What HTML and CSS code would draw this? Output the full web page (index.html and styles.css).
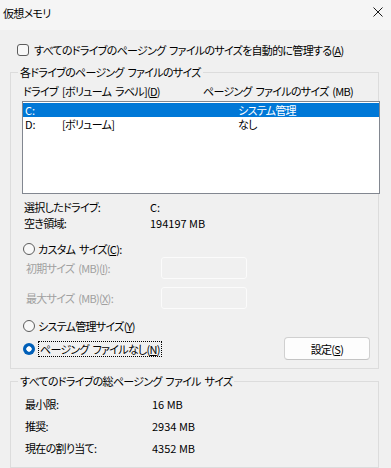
FILE: index.html
```html
<!DOCTYPE html>
<html lang="ja">
<head>
  <meta charset="UTF-8" />
  <meta name="viewport" content="width=device-width, initial-scale=1.0" />
  <title>仮想メモリ</title>
  <link rel="stylesheet" href="styles.css">
</head>
<body>

  <div class="window">
    <div class="titlebar">
      <span class="title">仮想メモリ</span>
      <svg class="close" width="10" height="10" viewBox="0 0 10 10">
        <path d="M0.5 0.5 L9.5 9.5 M9.5 0.5 L0.5 9.5" stroke="#1a1a1a" stroke-width="1" fill="none" />
      </svg>
    </div>

    <div class="content">
      <div class="check-row">
        <span class="checkbox"></span>
        <span>すべてのドライブのページング ファイルのサイズを自動的に管理する(<u>A</u>)</span>
      </div>

      <fieldset class="group">
        <legend>各ドライブのページング ファイルのサイズ</legend>

        <div class="list-header">
          <span>ドライブ</span>
          <span>[ボリューム ラベル](<u>D</u>)</span>
          <span>ページング ファイルのサイズ (MB)</span>
        </div>

        <div class="listbox">
          <div class="list-row selected">
            <span class="num">C:</span>
            <span></span>
            <span>システム管理</span>
          </div>
          <div class="list-row">
            <span class="num">D:</span>
            <span>[ボリューム]</span>
            <span>なし</span>
          </div>
        </div>

        <div class="info">
          <div class="info-row"><span>選択したドライブ:</span><span class="num">C:</span></div>
          <div class="info-row"><span>空き領域:</span><span class="num">194197 MB</span></div>
        </div>

        <div class="radio-row custom">
          <span class="radio"></span>
          <span>カスタム サイズ(<u>C</u>):</span>
        </div>
        <div class="size-row">
          <span>初期サイズ (MB)(<u>I</u>):</span>
          <span class="size-input"></span>
        </div>
        <div class="size-row second">
          <span>最大サイズ (MB)(<u>X</u>):</span>
          <span class="size-input"></span>
        </div>

        <div class="radio-row system">
          <span class="radio"></span>
          <span>システム管理サイズ(<u>Y</u>)</span>
        </div>
        <div class="none-row">
          <div class="radio-row">
            <span class="radio checked"></span>
            <span class="focus">ページング ファイルなし(<u>N</u>)</span>
          </div>
          <button class="set-button">設定(<u>S</u>)</button>
        </div>
      </fieldset>

      <fieldset class="group totals">
        <legend>すべてのドライブの総ページング ファイル サイズ</legend>
        <div class="total-row"><span>最小限:</span><span class="num">16 MB</span></div>
        <div class="total-row"><span>推奨:</span><span class="num">2934 MB</span></div>
        <div class="total-row"><span>現在の割り当て:</span><span class="num">4352 MB</span></div>
      </fieldset>
    </div>
  </div>

</body>
</html>
```

FILE: styles.css
```css
* {
  box-sizing: border-box;
}
body {
  margin: 0;
  font-family: "Noto Sans CJK JP", "Noto Sans", sans-serif;
  font-size: 11px;
  letter-spacing: -0.7px;
  word-spacing: 2px;
  font-feature-settings: "palt";
  color: #000;
}
u {
  text-underline-offset: 1px;
}
.num {
  letter-spacing: 0;
  word-spacing: 0;
}
.window {
  width: 391px;
  height: 468px;
  background-color: #f0f0f0;
  overflow: hidden;
}
.titlebar {
  height: 30px;
  background-color: #f5f5f5;
  display: flex;
  justify-content: space-between;
  align-items: flex-start;
  padding: 5px 8px 0 3px;
  line-height: 16px;
}
.close {
  margin-top: 2px;
}
.content {
  padding: 0 12px 0 10px;
}
.check-row {
  margin-top: 12px;
  height: 16px;
  display: flex;
  align-items: center;
  padding-left: 7px;
  white-space: nowrap;
}
.checkbox {
  width: 12px;
  height: 12px;
  border: 1px solid #5c5c5c;
  border-radius: 3px;
  background-color: #f8f8f8;
  margin-right: 5px;
}
.group {
  margin: 7px 0 0 0;
  padding: 0 0 8px 0;
  width: 369px;
  min-width: 0;
  border: 1px solid #dcdcdc;
}
.group legend {
  margin-left: 7px;
  padding: 0 2px;
  line-height: 14px;
}
.list-header {
  margin-top: 5px;
  line-height: 14px;
  display: grid;
  grid-template-columns: 39px 141px auto;
  padding-left: 12px;
  white-space: nowrap;
}
.listbox {
  margin: 3px 0 0 11px;
  width: 358px;
  height: 93px;
  border: 1px solid #828790;
  background-color: #fff;
  padding-top: 1px;
}
.list-row {
  height: 14px;
  line-height: 14px;
  display: grid;
  grid-template-columns: 37px 176px auto;
  padding-left: 2px;
}
.list-row.selected {
  background-color: #0078d7;
  color: #fff;
}
.info {
  margin-top: 5px;
}
.info-row {
  line-height: 16px;
  display: grid;
  grid-template-columns: 126px auto;
  padding-left: 13px;
}
.radio-row {
  height: 16px;
  display: flex;
  align-items: center;
  padding-left: 12px;
}
.radio {
  width: 12px;
  height: 12px;
  border: 1px solid #5c5c5c;
  border-radius: 50%;
  background-color: #f8f8f8;
  margin-right: 3px;
}
.radio.checked {
  border: none;
  background: radial-gradient(circle, #fff 0, #fff 2.4px, #005fb8 3px);
}
.radio-row.custom {
  margin-top: 10px;
}
.radio-row.system {
  margin-top: 9px;
}
.size-row {
  height: 22px;
  display: grid;
  grid-template-columns: 135px 86px;
  align-items: center;
  padding-left: 15px;
  color: #a0a0a0;
}
.size-row.second {
  margin-top: 8px;
}
.size-input {
  height: 22px;
  border: 1px solid #fbfbfb;
  border-radius: 3px;
}
.none-row {
  margin-top: 3px;
  height: 23px;
  display: flex;
  justify-content: space-between;
  align-items: center;
  padding-right: 8px;
}
.focus {
  line-height: 14px;
  padding: 0 1px;
  border: 1px dotted #000;
}
.set-button {
  width: 86px;
  height: 23px;
  padding: 0;
  font-family: inherit;
  font-size: 11px;
  letter-spacing: -0.7px;
  font-feature-settings: "palt";
  color: #000;
  background-color: #fdfdfd;
  border: 1px solid #d0d0d0;
  border-bottom-color: #c4c4c4;
  border-radius: 4px;
}
.totals {
  margin-top: 5px;
}
.total-row {
  height: 22px;
  line-height: 22px;
  display: grid;
  grid-template-columns: 127px auto;
  padding-left: 14px;
}
.total-row:first-of-type {
  margin-top: 5px;
}
```
